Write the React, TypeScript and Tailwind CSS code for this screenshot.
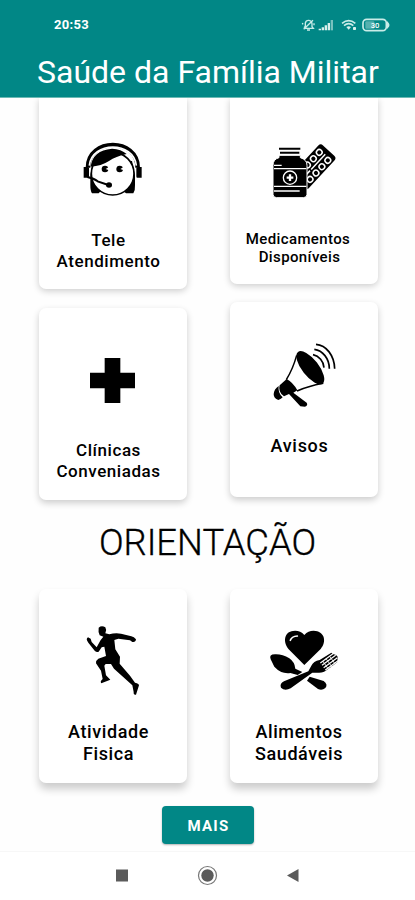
import type { ReactNode } from 'react';

function Card({ className, icon, children }: { className: string; icon: ReactNode; children: ReactNode }) {
  return (
    <section className={`flex w-[148px] flex-col bg-white text-center font-medium whitespace-nowrap text-black ${className}`}>
      <div className="flex pl-[31px]">{icon}</div>
      {children}
    </section>
  );
}

function Operator() {
  return (
    <svg className="h-[70px] w-[90px] shrink-0" viewBox="0 0 270 210">
      <path d="M61 120V150Q61 168 66 175H86L100 160L150 160L168 175H190Q196 166 195 150V120L186 78H69Z" />
      <circle cx="128" cy="116" r="64" fill="#fff" stroke="#000" strokeWidth="5" />
      <path d="M62 95Q68 46 126 41Q154 42 170 57Q137 64 117 78Q94 93 62 95Z" />
      <path d="M54 98C54 8 203 8 203 98" fill="none" stroke="#000" strokeWidth="14" />
      <path d="M58 92C65 18 192 18 199 92" fill="none" stroke="#fff" strokeWidth="5" />
      <path d="M52 96H41V128H52Q57 130 57 124V98M204 96H215V128H204Q199 130 199 124V98" />
      <circle cx="105" cy="102" r="10" /><circle cx="149" cy="102" r="10" />
      <path d="M107 102L117 96V106ZM151 102L161 96V106Z" fill="#fff" />
      <path d="M52 126Q72 130 83 139L115 150" fill="none" stroke="#000" strokeWidth="6" />
      <ellipse cx="117" cy="150" rx="9" ry="8" />
    </svg>
  );
}

function Medicine() {
  return (
    <svg className="h-[70px] w-[90px] shrink-0" viewBox="0 0 270 210">
      <g transform="translate(160 93) rotate(43)">
        <rect x="-33" y="-63" width="66" height="132" rx="10" />
        <g fill="none" stroke="#fff" strokeWidth="4.500">
          <path d="M0 -48V64" strokeDasharray="62 5" />
          <circle cx="-17" cy="-40" r="8.5" /><circle cx="-17" cy="-14" r="8.5" /><circle cx="-17" cy="12" r="8.5" />
          <circle cx="18" cy="-40" r="8.5" /><circle cx="18" cy="-14" r="8.5" /><circle cx="18" cy="12" r="8.5" /><circle cx="18" cy="38" r="8.5" />
        </g>
      </g>
      <path d="M54 61H118V68Q138 74 138 91V178Q138 188 127 188H47Q36 188 36 178V91Q36 73 54 68Z" stroke="#fff" strokeWidth="3" />
      <path d="M54 41H118M57 53H115" stroke="#000" strokeWidth="6" />
      <g fill="none" stroke="#fff" strokeWidth="4">
        <path d="M39 91H62M39 101H136M39 154H136M39 168H116" />
        <circle cx="87" cy="128" r="20" />
      </g>
      <path d="M87 118V138M77 128H97" stroke="#fff" strokeWidth="7" />
    </svg>
  );
}

function Cross() {
  return (
    <svg className="h-[80px] w-[90px] shrink-0" viewBox="0 0 270 240">
      <path d="M104 54H151V98H195V145H151V189H104V145H60V98H104Z" />
    </svg>
  );
}

function Megaphone() {
  return (
    <svg className="h-[80px] w-[90px] shrink-0" viewBox="0 0 270 240">
      <ellipse cx="148" cy="98" rx="60" ry="25" transform="rotate(52 148 98)" />
      <path d="M107 61Q96 101 76 134M187 145Q140 154 108 168" fill="none" stroke="#000" strokeWidth="4.500" />
      <path d="M77 132Q96 142 109 166L97 173L137 203Q142 211 132 215L118 214L84 177L69 184Q50 171 56 151Z" />
      <path d="M53 153Q39 162 38 178Q38 190 52 195Q61 192 65 187Q50 174 53 153Z" />
      <path d="M165 28C196 30 220 62 221 101M160 43C185 46 205 71 205 101M156 59C174 63 188 79 189 98" fill="none" stroke="#000" strokeWidth="5" />
    </svg>
  );
}

function Runner() {
  return (
    <svg className="h-[90px] w-[90px] shrink-0" viewBox="0 0 270 270">
      <path d="M86 38Q95 30 106 37Q111 45 106 55L118 58Q135 53 153 56L184 64Q192 65 198 73Q197 83 187 81L180 76L145 71L133 75L136 103L150 125L149 146L180 182L195 203Q208 206 207 211L198 239Q190 241 191 231L187 211L132 161L123 147L107 147L103 152L108 181L121 194L94 205Q89 199 98 192L93 167L78 145Q77 136 85 131L108 123L103 95L95 97L86 110Q80 113 74 107L55 83Q46 72 54 67L62 71L65 81L80 97L92 75L100 65L89 61Q84 50 86 38Z" />
    </svg>
  );
}

function Food() {
  return (
    <svg className="h-[80px] w-[90px] shrink-0" viewBox="0 0 270 240">
      <path d="M130 135L83 88C64 65 71 35 96 33Q116 30 130 45Q144 30 164 33C190 36 198 65 179 87Z" />
      <path d="M88 61Q92 49 109 48" fill="none" stroke="#fff" strokeWidth="5" strokeLinecap="round" />
      <path d="M29 118Q23 103 42 103Q64 102 85 115Q101 126 103 146L124 156L110 165L88 159Q61 163 40 140Z" />
      <path d="M146 170L188 183Q202 194 193 204Q183 213 171 207L138 182Z" />
      <path d="M60 203Q55 191 69 184L142 154L151 137Q157 124 176 120L211 98L216 102L225 105L230 110L229 126L213 139L192 154Q181 160 154 158L89 205Q71 214 60 203Z" />
      <path d="M178 129L218 100M183 136L224 106M188 143L229 113M193 150L231 122" stroke="#fff" strokeWidth="3.600" />
      <path d="M185 123L202 147M195 116L213 141M206 109L223 133" stroke="#fff" strokeWidth="2.400" />
    </svg>
  );
}

function StatusIcons() {
  return (
    <svg className="mt-[17px] ml-[210px] h-[16px] w-[92px] shrink-0" viewBox="0 0 276 48" fill="none" stroke="#c9ece8" strokeWidth="4">
      <path d="M12 32L16 28V18Q18 9 27 10Q35 11 36 20V29L40 34H14M21 39H30M39 10L11 37M7 18L9 22M42 19V25" />
      <g fill="#d8f0ed" stroke="none">
        <path d="M56 40V35H63V40ZM65 40V31H72V40ZM74 40V25H81V40ZM83 40V18H90V40Z" />
        <path d="M92 40V9H99V40Z" opacity=".55" />
        <path d="M139 30L146 38L153 30Q146 25 139 30Z" /><rect x="159" y="30" width="9" height="9" rx="2" />
      </g>
      <path d="M126 19Q146 3 166 19M132 26Q146 14 160 26" strokeWidth="5" />
      <rect x="189" y="7" width="70" height="34" rx="11" strokeWidth="5" />
      <path d="M263 17V31Q270 24 263 17Z" fill="#d8f0ed" />
      <rect x="196" y="13" width="27" height="22" rx="3" fill="#d8f0ed" opacity=".4" stroke="none" />
      <text x="225" y="32" textAnchor="middle" fontSize="23" fontWeight="500" fill="#fff" stroke="none">30</text>
    </svg>
  );
}

export default function App() {
  return (
    <div className="flex h-[900px] w-[415px] flex-col overflow-hidden bg-white font-['Roboto',sans-serif]">
      <header className="h-[98px] shrink-0 border-b border-[#6bb9b4] bg-[#018786] text-white">
        <div className="flex h-[48px] pl-[54px]">
          <span className="w-[36px] pt-[17px] text-[13px] leading-[16px] font-bold tracking-[0.3px] whitespace-nowrap">20:53</span>
          <StatusIcons />
        </div>
        <h1 className="pl-[37px] text-[32px] leading-[48px] whitespace-nowrap">Saúde da Família Militar</h1>
      </header>
      <main className="h-[753px] shrink-0 bg-[#fefefe]">
        <div className="flex h-[418px] items-start gap-[43px] overflow-hidden pl-[39px]">
          <div className="flex flex-col gap-[19px]">
            <Card className="h-[191px] rounded-b-[7px] pt-[37px] shadow-[0_2px_7px_rgba(0,0,0,0.2)]" icon={<Operator />}>
              <p className="mt-[25px] pr-[9px] text-[17px] leading-[21px] tracking-[0.55px]">Tele<br />Atendimento</p>
            </Card>
            <Card className="h-[192px] rounded-[7px] pt-[32px] shadow-[0_3px_7px_rgba(0,0,0,0.2)]" icon={<Cross />}>
              <p className="mt-[20px] pr-[9px] text-[17px] leading-[21px] tracking-[0.55px]">Clínicas<br />Conveniadas</p>
            </Card>
          </div>
          <div className="flex flex-col gap-[18px]">
            <Card className="h-[186px] rounded-b-[7px] pt-[37px] shadow-[0_2px_7px_rgba(0,0,0,0.2)]" icon={<Medicine />}>
              <p className="mt-[25px] pr-[12px] text-[15px] leading-[18px] tracking-[0.38px]">Medicamentos<br /><span className="pl-[3px]">Disponíveis</span></p>
            </Card>
            <Card className="h-[195px] rounded-[7px] pt-[33px] shadow-[0_3px_7px_rgba(0,0,0,0.2)]" icon={<Megaphone />}>
              <p className="mt-[20px] pr-[9px] text-[18px] leading-[21px] tracking-[0.7px]">Avisos</p>
            </Card>
          </div>
        </div>
        <h2 className="h-[71px] pt-[3px] text-center text-[36.4px] leading-[48px] font-light whitespace-nowrap text-black [-webkit-text-stroke:0.3px_black]">ORIENTAÇÃO</h2>
        <div className="flex h-[219px] gap-[43px] overflow-hidden pt-[2px] pl-[39px]">
          <Card className="h-[194px] rounded-[7px] pt-[26px] shadow-[0_6px_8px_rgba(0,0,0,0.2)]" icon={<Runner />}>
            <p className="mt-[16px] pr-[9px] text-[18px] leading-[22px] tracking-[0.6px]">Atividade<br />Fisica</p>
          </Card>
          <Card className="h-[194px] rounded-[7px] pt-[31px] shadow-[0_6px_8px_rgba(0,0,0,0.2)]" icon={<Food />}>
            <p className="mt-[21px] pr-[10px] text-[18px] leading-[22px] tracking-[0.6px]">Alimentos<br />Saudáveis</p>
          </Card>
        </div>
        <button className="ml-[162px] block h-[38px] w-[92px] rounded-[4px] bg-[#018786] pt-[2px] pl-[1px] text-[15px] font-bold tracking-[1.2px] text-white shadow-[0_1px_2px_rgba(0,0,0,0.3)]">MAIS</button>
      </main>
      <nav className="flex h-[49px] shrink-0 items-start border-t border-[#f7f7f7] bg-white">
        <svg className="h-[48px] w-[415px]" viewBox="0 0 415 48">
          <rect x="116" y="17.5" width="12" height="12" fill="#5b5b5b" />
          <circle cx="207.5" cy="23.5" r="9" fill="none" stroke="#777" strokeWidth="1.2" />
          <circle cx="207.5" cy="23.5" r="6.2" fill="#5b5b5b" />
          <path d="M287 23.5L298.500 17V30Z" fill="#5b5b5b" />
        </svg>
      </nav>
    </div>
  );
}
